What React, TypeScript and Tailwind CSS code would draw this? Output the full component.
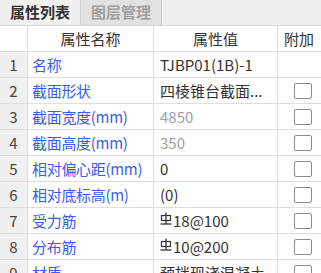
import React from "react";

const Rebar = () => (
  <svg width="12" height="14" viewBox="0 0 12 14" className="inline-block mr-[1px] -mt-[4px]">
    <line x1="6" y1="0.5" x2="6" y2="12" stroke="#333" strokeWidth="1.3" />
    <rect x="1.5" y="3.5" width="9" height="5" fill="none" stroke="#333" strokeWidth="1.2" />
    <line x1="0.5" y1="12" x2="11.5" y2="12" stroke="#333" strokeWidth="1.3" />
  </svg>
);

type Row = { n: string; name: string; value: React.ReactNode; gray?: boolean; check?: boolean };

const rows: Row[] = [
  { n: "1", name: "名称", value: "TJBP01(1B)-1", check: false },
  { n: "2", name: "截面形状", value: "四棱锥台截面...", check: true },
  { n: "3", name: "截面宽度(mm)", value: "4850", gray: true, check: true },
  { n: "4", name: "截面高度(mm)", value: "350", gray: true, check: true },
  { n: "5", name: "相对偏心距(mm)", value: "0", check: true },
  { n: "6", name: "相对底标高(m)", value: "(0)", check: true },
  { n: "7", name: "受力筋", value: (<><Rebar />18@100</>), check: true },
  { n: "8", name: "分布筋", value: (<><Rebar />10@200</>), check: true },
  { n: "9", name: "材质", value: "预拌现浇混凝土", check: true },
];

export default function App() {
  return (
    <div
      className="w-[321px] h-[273px] overflow-hidden bg-white text-[15px] text-[#333]"
      style={{ fontFamily: '"Noto Sans CJK SC", "Noto Sans", sans-serif' }}
    >
      <div className="flex h-[26px] bg-[#f0f0f0] border-b border-[#d6d6d6]">
        <div className="w-[81px] flex items-center justify-center font-bold text-[#333] bg-[#f0f0f0] border-r border-[#d0d0d0]">
          属性列表
        </div>
        <div className="w-[81px] flex items-center justify-center font-bold text-[#a0a0a0] bg-[#e2e2e2] border-r border-[#cfcfcf]">
          图层管理
        </div>
      </div>
      <div className="flex h-[26px] border-b border-[#dedede] leading-none">
        <div className="w-[28px] shrink-0 border-r border-[#dedede]" />
        <div className="w-[126px] shrink-0 border-r border-[#dedede] flex items-center justify-center">属性名称</div>
        <div className="w-[124px] shrink-0 border-r border-[#dedede] flex items-center justify-center">属性值</div>
        <div className="shrink-0 flex items-center pl-[6px] whitespace-nowrap">附加</div>
      </div>
      {rows.map((r) => (
        <div key={r.n} className="flex h-[26px] border-b border-[#dedede] leading-none">
          <div className="w-[28px] shrink-0 border-r border-[#dedede] bg-[#f0f0f0] flex items-center justify-center text-[#444]">
            {r.n}
          </div>
          <div className="w-[126px] shrink-0 border-r border-[#dedede] flex items-center pl-[4px] tracking-[-0.3px] text-[#3a5cf0] whitespace-nowrap overflow-hidden">
            {r.name}
          </div>
          <div
            className={
              "w-[124px] shrink-0 border-r border-[#dedede] flex items-center pl-[6px] whitespace-nowrap overflow-hidden " +
              (r.gray ? "text-[#a0a0a0]" : "text-[#333]")
            }
          >
            {r.value}
          </div>
          <div className="flex-1 flex items-center pl-[16px]">
            {r.check && <div className="w-[18px] h-[16px] border border-[#8a8a8a] rounded-[2px] bg-white" />}
          </div>
        </div>
      ))}
    </div>
  );
}
